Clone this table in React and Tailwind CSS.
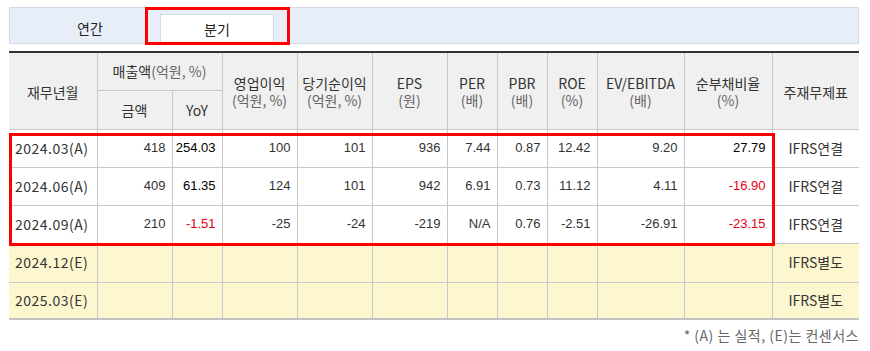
import React from 'react';

const cols = [88, 75, 50, 75, 75, 75, 50, 50, 50, 87, 88, 87];

const rows = [
  {
    date: '2024.03(A)',
    vals: ['418', '254.03', '100', '101', '936', '7.44', '0.87', '12.42', '9.20', '27.79'],
    tone: ['', 'k', '', '', '', '', '', '', '', 'k'],
    std: 'IFRS연결',
  },
  {
    date: '2024.06(A)',
    vals: ['409', '61.35', '124', '101', '942', '6.91', '0.73', '11.12', '4.11', '-16.90'],
    tone: ['', 'k', '', '', '', '', '', '', '', 'r'],
    std: 'IFRS연결',
  },
  {
    date: '2024.09(A)',
    vals: ['210', '-1.51', '-25', '-24', '-219', 'N/A', '0.76', '-2.51', '-26.91', '-23.15'],
    tone: ['', 'r', '', '', '', '', '', '', '', 'r'],
    std: 'IFRS연결',
  },
];

const estimates = [
  { date: '2024.12(E)', std: 'IFRS별도', h: 'h-[39px]' },
  { date: '2025.03(E)', std: 'IFRS별도', h: 'h-[37px]' },
];

const kr = { fontFamily: '"Noto Sans CJK KR", "Noto Sans", sans-serif' };
const num = { fontFamily: '"Liberation Sans", Arial, sans-serif' };

const toneClass = {
  '': 'text-[#333]',
  k: 'text-black',
  r: 'text-[#e60012]',
};

function HeadTwo({ top, sub }) {
  return (
    <th rowSpan={2} className="border-r border-[#c8c8c8] font-normal text-[14px] leading-[17px] text-[#333] pt-[3px]">
      <div>{top}</div>
      <div className="text-[#666]">{sub}</div>
    </th>
  );
}

export default function App() {
  return (
    <div className="relative w-[870px] h-[351px] overflow-hidden bg-white" style={kr}>
      <div className="pl-[9px] pt-[7px] w-[859px]">
        <div className="h-[37px] border border-[#d3dbe8] bg-[#e8eef8] flex items-end pl-[23px] gap-[13px]">
          <div className="w-[114px] h-[29px] flex items-center justify-center text-[14px] text-[#222]">연간</div>
          <div className="w-[114px] h-[29px] bg-white border border-b-0 border-[#d3dbe8] flex items-center justify-center text-[14px] text-[#222]">분기</div>
        </div>

        <table className="mt-[7px] w-[850px] table-fixed border-collapse border-t-2 border-t-[#333]">
          <colgroup>
            {cols.map((w, i) => (
              <col key={i} style={{ width: w }} />
            ))}
          </colgroup>
          <thead className="bg-[#f0f0f0]">
            <tr className="h-[38px]">
              <th rowSpan={2} className="border-r border-[#c8c8c8] font-normal text-[14px] text-[#333] pt-[3px]">재무년월</th>
              <th colSpan={2} className="border-r border-b border-[#c8c8c8] font-normal text-[14px] text-[#333]">
                매출액<span className="text-[#666]">(억원, %)</span>
              </th>
              <HeadTwo top="영업이익" sub="(억원, %)" />
              <HeadTwo top="당기순이익" sub="(억원, %)" />
              <HeadTwo top="EPS" sub="(원)" />
              <HeadTwo top="PER" sub="(배)" />
              <HeadTwo top="PBR" sub="(배)" />
              <HeadTwo top="ROE" sub="(%)" />
              <HeadTwo top="EV/EBITDA" sub="(배)" />
              <HeadTwo top="순부채비율" sub="(%)" />
              <th rowSpan={2} className="font-normal text-[14px] text-[#333] pt-[3px]">주재무제표</th>
            </tr>
            <tr className="h-[39px]">
              <th className="border-r border-[#c8c8c8] font-normal text-[14px] text-[#333] pt-[2px]">금액</th>
              <th className="border-r border-[#c8c8c8] font-normal text-[14px] text-[#333] pt-[2px]">YoY</th>
            </tr>
          </thead>
          <tbody className="border-b-2 border-b-[#c4c4c4]">
            {rows.map((r) => (
              <tr key={r.date} className="h-[38px] border-t border-[#c8c8c8]">
                <td className="border-r border-[#c8c8c8] pl-[6px] text-[14px] tracking-[0.5px] text-[#333]">{r.date}</td>
                {r.vals.map((v, i) => (
                  <td
                    key={i}
                    style={num}
                    className={`border-r border-[#c8c8c8] text-right pr-[6px] text-[13px] ${toneClass[r.tone[i]]}`}
                  >
                    {v}
                  </td>
                ))}
                <td className="text-center text-[14px] text-[#333]">{r.std}</td>
              </tr>
            ))}
            {estimates.map((r) => (
              <tr key={r.date} className={`${r.h} border-t border-[#c8c8c8] bg-[#fdf7cf]`}>
                <td className="border-r border-[#c8c8c8] pl-[6px] text-[14px] tracking-[0.5px] text-[#333]">{r.date}</td>
                {cols.slice(1, 11).map((_, i) => (
                  <td key={i} className="border-r border-[#c8c8c8]"></td>
                ))}
                <td className="text-center text-[14px] text-[#333]">{r.std}</td>
              </tr>
            ))}
          </tbody>
        </table>

        <div className="mt-[5px] text-right text-[14px] tracking-[0.5px] text-[#666] leading-[20px]">* (A) 는 실적, (E)는 컨센서스</div>
      </div>

      {/* highlight boxes */}
      <div className="absolute left-[145px] top-[7px] w-[145px] h-[38px] border-[3px] border-[#ff0000]"></div>
      <div className="absolute left-[9px] top-[133px] w-[766px] h-[113px] border-[3px] border-[#ff0000]"></div>
    </div>
  );
}
